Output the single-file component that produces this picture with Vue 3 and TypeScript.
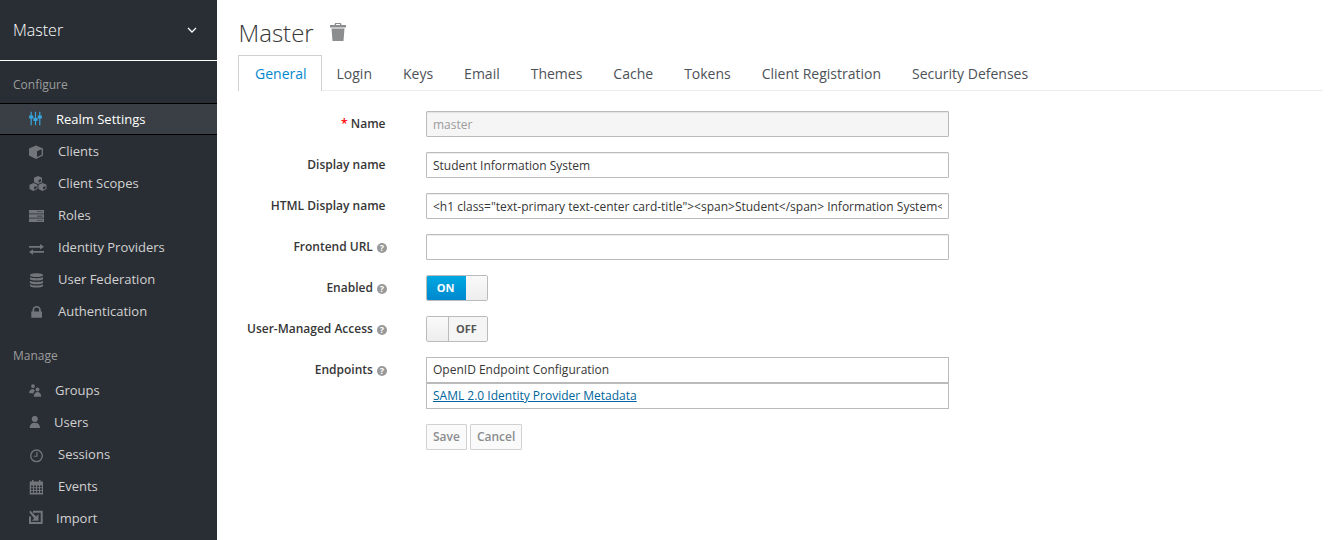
<script setup lang="ts">
const tabs = ['General', 'Login', 'Keys', 'Email', 'Themes', 'Cache', 'Tokens', 'Client Registration', 'Security Defenses']

// calendar grid is just holes punched in a solid block
let calCells = ''
for (const y of [7.4, 10.2, 13]) {
  for (const x of [2, 5, 8, 11]) calCells += `M${x} ${y}h2v1.800h-2Z`
}

const paths: Record<string, string> = {
  sliders: 'M1.600 .7H2.800V4.500H4.300V7.500H2.800V14.300H1.600V7.500H.1V4.500H1.600ZM5.900 .7H7.100V7H8.600V10H7.100V14.300H5.900V10H4.400V7H5.900ZM10.200 .7H11.400V4.500H12.900V7.500H11.400V14.300H10.200V7.500H8.700V4.500H10.200Z',
  cube: 'M7 2.500 14 5.500V12.500L7 16 0 12.500V5.500ZM8 8.200V14L12.700 11.700V6.300Z',
  cubes: 'M9 1 13 2.800V7.200L9 9 5 7.200V2.800ZM9.600 5V7.500L12 6.400V3.900ZM4.500 8 8.500 9.800V14L4.500 16 .5 14V9.800ZM5.100 12V14.500L7.500 13.400V10.900ZM13.500 8 17.500 9.800V14L13.500 16 9.500 14V9.800ZM14.100 12V14.500L16.500 13.400V10.900Z',
  roles: 'M0 3H15V6.500H0ZM8 4.500V5.100H13.500V4.500ZM0 7.300H15V10.800H0ZM8 8.800V9.400H13.500V8.800ZM0 11.600H15V15H0ZM8 13V13.600H13.500V13Z',
  exchange: 'M0 7H11V5L15 7.800 11 10.400V8.700H0ZM15 12V13.700H4V15.700L0 13 4 10.200V12Z',
  db: 'M7.500 2.300C11 2.300 14 3 14 4.200S11 6 7.500 6 1 5.400 1 4.200 4 2.300 7.500 2.300ZM1 6C2.500 7.600 12.500 7.600 14 6V8.300C12.500 10 2.500 10 1 8.300ZM1 9.700C2.500 11.300 12.500 11.300 14 9.700V12C12.500 13.700 2.500 13.700 1 12ZM1 13.300C2.500 15 12.500 15 14 13.300V15C12.500 17 2.500 17 1 15Z',
  lock: 'M2.300 8.500H3.500V7C3.500 1.500 11.800 1.500 11.800 7V8.500H13V14.700H2.300ZM5.200 8.500H10.100V7C10.100 3.800 5.200 3.800 5.200 7Z',
  groups: 'M4 2.300A1.900 1.900 0 1 1 4 6.100 1.900 1.900 0 0 1 4 2.300ZM0 11C.5 8 2 7 4 7L6 8.500C5 9.500 4.500 10.500 4.300 11.500ZM8.500 5.500A2 2 0 1 1 8.500 9.500 2 2 0 0 1 8.500 5.500ZM4.700 14.700C5 11.500 6.500 10 8.500 10S12 11.500 12.300 14.700Z',
  user: 'M5.800 2A3 3 0 1 1 5.800 8 3 3 0 0 1 5.800 2ZM.7 14C.7 10.500 2.500 8.700 5.800 8.700S11 10.500 11 14Z',
  clock: 'M7.500 3.300A6.500 6.500 0 1 1 7.500 16.300 6.500 6.500 0 0 1 7.500 3.300ZM7.500 4.700A5.100 5.100 0 1 0 7.500 14.900 5.100 5.100 0 0 0 7.500 4.700ZM7.300 6H8.500V10.800H4.800V9.800H7.300Z',
  cal: 'M.7 3.500H3V2H4.500V3.500H10V2H11.500V3.500H14V16.500H.7Z' + calCells,
  import: 'M4 .7H13.700V14H0V6.500H2V12H11.700V2.700H4ZM1.500 .7 7.200 6.400 9.500 4V10.700H2.800L5.200 8.400 .2 2Z',
}

// the text starts a little differently per icon, as in the real menu
const configure = [
  { label: 'Clients', icon: 'cube', w: 14, x: 15 },
  { label: 'Client Scopes', icon: 'cubes', w: 18, x: 11 },
  { label: 'Roles', icon: 'roles', w: 15, x: 14 },
  { label: 'Identity Providers', icon: 'exchange', w: 15, x: 14 },
  { label: 'User Federation', icon: 'db', w: 15, x: 14 },
  { label: 'Authentication', icon: 'lock', w: 14, x: 15 },
]
const manage = [
  { label: 'Groups', icon: 'groups', w: 13, x: 13 },
  { label: 'Users', icon: 'user', w: 12, x: 13 },
  { label: 'Sessions', icon: 'clock', w: 15, x: 14 },
  { label: 'Events', icon: 'cal', w: 15, x: 14 },
  { label: 'Import', icon: 'import', w: 14, x: 13 },
]
</script>

<template>
  <div class="page">
    <aside class="sidebar">
      <div class="realm">
        <span>Master</span>
        <svg class="chev" width="10" height="7" viewBox="0 0 10 7"><path d="M1 1 5 5 9 1" fill="none" stroke="#fff" stroke-width="1.3" /></svg>
      </div>
      <div class="section first">Configure</div>
      <div class="item active">
        <svg class="icon" width="14" height="16" viewBox="0 0 14 16" fill="#39a5dc"><path :d="paths.sliders" /></svg>
        <span class="txt-active">Realm Settings</span>
      </div>
      <div v-for="i in configure" :key="i.label" class="item">
        <svg class="icon" :width="i.w" height="16" :viewBox="`0 0 ${i.w} 16`" fill="#72767b"><path :d="paths[i.icon]" fill-rule="evenodd" /></svg>
        <span :style="{ marginLeft: i.x + 'px' }">{{ i.label }}</span>
      </div>
      <div class="section">Manage</div>
      <div v-for="i in manage" :key="i.label" class="item">
        <svg class="icon" :width="i.w" height="16" :viewBox="`0 0 ${i.w} 16`" fill="#72767b"><path :d="paths[i.icon]" fill-rule="evenodd" /></svg>
        <span :style="{ marginLeft: i.x + 'px' }">{{ i.label }}</span>
      </div>
    </aside>
    <main class="content">
      <h1 class="title">
        Master
        <svg width="16" height="18" viewBox="0 0 16 18" fill="#8b8d8f"><path fill-rule="evenodd" d="M5 0H11L11.500 2H16V4.500H0V2H4.500ZM6 1V2H10V1ZM1.500 5.500H14.500L13.500 18H2.500Z" /></svg>
      </h1>
      <nav class="tabs">
        <a v-for="(t, n) in tabs" :key="t" class="tab" :class="{ on: n === 0 }">{{ t }}</a>
      </nav>
      <form class="form" @submit.prevent>
        <div class="row">
          <label><span class="req">*</span> Name</label>
          <input class="field" value="master" disabled />
        </div>
        <div class="row">
          <label>Display name</label>
          <input class="field" value="Student Information System" />
        </div>
        <div class="row">
          <label>HTML Display name</label>
          <input class="field" value='&lt;h1 class="text-primary text-center card-title"&gt;&lt;span&gt;Student&lt;/span&gt; Information System&lt;/h1&gt;' />
        </div>
        <div class="row">
          <label>Frontend URL <i class="help">?</i></label>
          <input class="field" />
        </div>
        <div class="row">
          <label>Enabled <i class="help">?</i></label>
          <div class="switch"><b class="state on">ON</b><span class="knob" /></div>
        </div>
        <div class="row">
          <label>User-Managed Access <i class="help">?</i></label>
          <div class="switch"><span class="knob" /><b class="state off">OFF</b></div>
        </div>
        <div class="row ends">
          <label>Endpoints <i class="help">?</i></label>
          <div class="links">
            <div class="link">OpenID Endpoint Configuration</div>
            <div class="link"><a>SAML 2.0 Identity Provider Metadata</a></div>
          </div>
        </div>
        <div class="actions">
          <button disabled>Save</button>
          <button disabled>Cancel</button>
        </div>
      </form>
    </main>
  </div>
</template>

<style>
body { margin: 0; }
</style>

<style scoped>
.page {
  display: flex;
  width: 1344px;
  height: 540px;
  overflow: hidden;
  font-family: "Open Sans", "Noto Sans", sans-serif;
  font-size: 13px;
  color: #363636;
  background: #fff;
}
.sidebar {
  width: 217px;
  flex-shrink: 0;
  background: #292e34;
  color: #d1d1d1;
}
.realm {
  height: 60px;
  display: flex;
  align-items: center;
  justify-content: space-between;
  padding: 0 20px 0 13px;
  font-size: 16px;
  font-weight: 300;
  color: #fff;
  border-bottom: 1px solid #fff;
}
.section {
  font-size: 12px;
  color: #9c9c9c;
  padding: 20px 13px 10px;
  line-height: 17px;
}
.section.first { padding-top: 15px; }
.item {
  height: 32px;
  display: flex;
  align-items: center;
  padding-left: 29px;
}
.icon { flex-shrink: 0; overflow: visible; }
.txt-active { margin-left: 13px; }
.item.active {
  background: #393f44;
  border-top: 1px solid #000;
  border-bottom: 1px solid #000;
  box-sizing: border-box;
  color: #fff;
}
.content { flex: 1; padding-left: 21px; min-width: 0; }
.title {
  margin: 0;
  height: 55px;
  display: flex;
  align-items: center;
  gap: 16px;
  font-size: 24px;
  font-weight: 300;
  padding: 9px 0 0 0.5px;
  box-sizing: border-box;
  color: #363636;
}
.tabs {
  display: flex;
  height: 35px;
  border-bottom: 1px solid #ededed;
  margin-right: 21px;
}
.tab {
  padding: 0 16px 0 15px;
  line-height: 37px;
  font-size: 14px;
  color: #4d5258;
}
.tab.on {
  padding: 0 14px 0 16px;
  color: #0088ce;
  background: #fff;
  border: 1px solid #d1d1d1;
  border-bottom: 0;
  line-height: 36px;
  height: 35px;
}
.form { padding-top: 20px; }
.row {
  display: flex;
  align-items: center;
  min-height: 26px;
  margin-bottom: 15px;
}
.row label {
  width: 147.5px;
  margin-right: 40.5px;
  padding-bottom: 2px;
  text-align: right;
  font-weight: 600;
  font-size: 12px;
  white-space: nowrap;
}
.req { color: #f00; }
.help {
  display: inline-block;
  width: 10px;
  height: 10px;
  border-radius: 50%;
  background: #999;
  color: #fff;
  font-size: 9px;
  font-weight: 700;
  line-height: 10px;
  text-align: center;
  font-style: normal;
  margin: 0 -1.500px 0 1px;
}
.field {
  width: 523px;
  height: 26px;
  box-sizing: border-box;
  padding: 2px 6px;
  border: 1px solid #bbb;
  border-radius: 1px;
  box-shadow: inset 0 1px 1px rgba(3, 3, 3, 0.075);
  font: 12px "Open Sans", sans-serif;
  color: #363636;
  background: #fff;
  outline: none;
}
.field:disabled { background: #f5f5f5; color: #9c9c9c; }
.switch {
  width: 62px;
  height: 26px;
  box-sizing: border-box;
  border: 1px solid #bbb;
  border-radius: 2px;
  display: flex;
  font-size: 11px;
  overflow: hidden;
}
.state {
  width: 39px;
  text-align: center;
  line-height: 24px;
  color: #555;
  background: #f5f5f5;
  box-sizing: border-box;
}
.state.on { background: linear-gradient(#00a8e1, #0088ce); color: #fff; padding-right: 2px; }
.state.off { border-left: 1px solid #bbb; padding-right: 3px; }
.knob {
  flex: 1;
  background: linear-gradient(#fafafa, #ededed);
}
.ends { align-items: flex-start; }
.ends label { line-height: 26px; }
.links { width: 523px; }
.link {
  height: 26px;
  box-sizing: border-box;
  border: 1px solid #bbb;
  padding: 0 6px;
  line-height: 24px;
  font-size: 12px;
}
.link a { color: #00659c; text-decoration: underline; }
.actions { margin-left: 188px; display: flex; gap: 3px; }
.actions button {
  height: 26px;
  padding: 0 6px 2px;
  border: 1px solid #d1d1d1;
  border-radius: 1px;
  background: #fafafa;
  color: #8b8d8f;
  font: 600 12px "Open Sans", sans-serif;
}
</style>
